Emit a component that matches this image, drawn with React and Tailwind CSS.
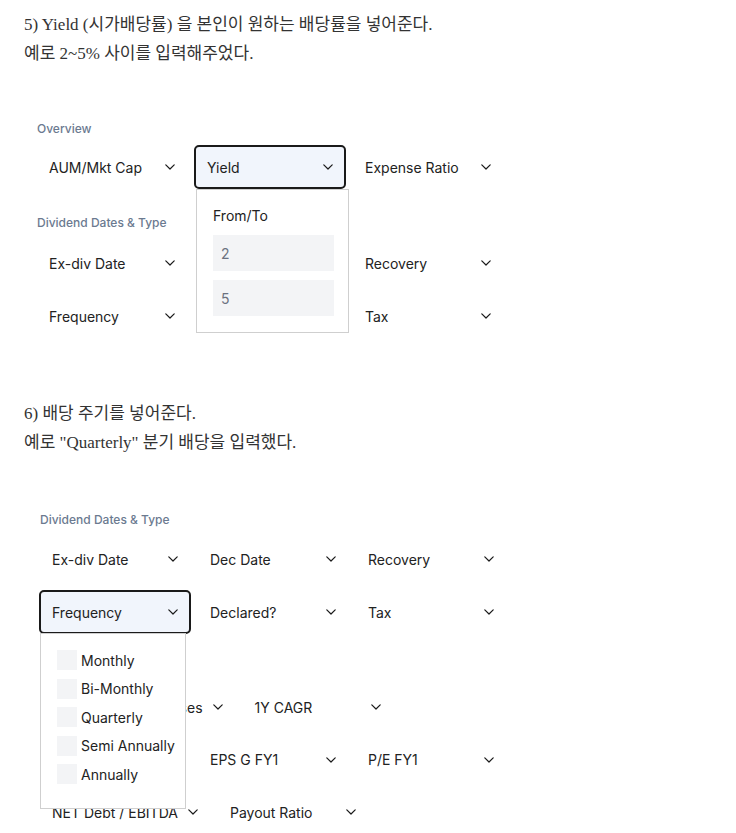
import React from "react";

const Chevron = () => (
  <svg width="10" height="6" viewBox="0 0 10 6" fill="none" className="shrink-0">
    <path d="M0.8 0.8L5 5L9.2 0.8" stroke="#1a1a1a" strokeWidth="1.2" strokeLinecap="round" strokeLinejoin="round" />
  </svg>
);

const Btn = ({ label, selected, children }) => (
  <div className="relative">
    <div
      className={
        selected
          ? "flex h-[44px] min-w-[152px] items-center justify-between gap-[10px] rounded-[5px] border-2 border-[#1a1a1a] bg-[#f1f5fc] px-[11px] text-[14px] text-[#222]"
          : "flex h-[44px] min-w-[150px] items-center justify-between gap-[10px] px-3 text-[14px] text-[#222]"
      }
    >
      <span className="whitespace-nowrap">{label}</span>
      <Chevron />
    </div>
    {children}
  </div>
);

const Label = ({ children, mb = "mb-[10px]" }) => (
  <div className={`${mb} h-[16px] text-[12px] leading-[16px] font-medium text-[#6b7a90]`}>{children}</div>
);

const Row = ({ children }) => <div className="flex gap-2">{children}</div>;

const serif = { fontFamily: '"Liberation Serif", "Noto Sans CJK KR", serif' };
const sans = { fontFamily: 'Inter, "Noto Sans", sans-serif' };

export default function App() {
  return (
    <div className="w-[736px] h-[833px] overflow-hidden bg-white">
      <div className="px-6 pt-[10px] text-[17px] leading-[29px] text-[#333]" style={serif}>
        <p>5) Yield (시가배당률) 을 본인이 원하는 배당률을 넣어준다.</p>
        <p>예로 2~5% 사이를 입력해주었다.</p>
      </div>

      <div className="mt-[53px] pl-[37px]" style={sans}>
        <Label mb="mb-[8px]">Overview</Label>
        <Row>
          <Btn label="AUM/Mkt Cap" />
          <div className="-mx-[1px]">
            <Btn label="Yield" selected>
              <div className="absolute left-[2px] top-[44px] z-10 w-[153px] h-[144px] border border-[#cfcfcf] bg-white px-4 pt-[17px]">
                <div className="text-[14px] leading-[18px] text-[#222]">From/To</div>
                <div className="mt-[10px] flex h-[36px] w-[121px] items-center bg-[#f3f4f6] px-2 text-[14px] text-[#6b7280]">2</div>
                <div className="mt-[9px] flex h-[36px] w-[121px] items-center bg-[#f3f4f6] px-2 text-[14px] text-[#6b7280]">5</div>
              </div>
            </Btn>
          </div>
          <Btn label="Expense Ratio" />
        </Row>
        <div className="mt-[26px]">
          <Label>Dividend Dates &amp; Type</Label>
          <div className="flex flex-col gap-[9px]">
            <Row>
              <Btn label="Ex-div Date" />
              <Btn label="Dec Date" />
              <Btn label="Recovery" />
            </Row>
            <Row>
              <Btn label="Frequency" />
              <Btn label="Declared?" />
              <Btn label="Tax" />
            </Row>
          </div>
        </div>
      </div>

      <div className="mt-[61px] px-6 text-[17px] leading-[29px] text-[#333]" style={serif}>
        <p>6) 배당 주기를 넣어준다.</p>
        <p>예로 "Quarterly" 분기 배당을 입력했다.</p>
      </div>

      <div className="mt-[55px] pl-[40px]" style={sans}>
        <Label mb="mb-[9px]">Dividend Dates &amp; Type</Label>
        <div className="flex flex-col gap-[9px]">
          <Row>
            <Btn label="Ex-div Date" />
            <Btn label="Dec Date" />
            <Btn label="Recovery" />
          </Row>
          <Row>
            <div className="-mx-[1px]">
              <Btn label="Frequency" selected>
                <div className="absolute left-[1px] top-[43px] z-10 w-[146px] h-[176px] border border-[#cfcfcf] bg-white pl-4 pt-[16px]">
                  <div className="flex flex-col gap-[8.5px]">
                    {["Monthly", "Bi-Monthly", "Quarterly", "Semi Annually", "Annually"].map((t) => (
                      <div key={t} className="flex h-[20px] items-center gap-1 text-[14px] text-[#222]">
                        <span className="h-[20px] w-[20px] shrink-0 bg-[#f3f4f6]" />
                        <span className="whitespace-nowrap">{t}</span>
                      </div>
                    ))}
                  </div>
                </div>
              </Btn>
            </div>
            <Btn label="Declared?" />
            <Btn label="Tax" />
          </Row>
        </div>
        <div className="mt-[25px]">
          <Label>Growth</Label>
          <div className="flex flex-col gap-[8.5px]">
            <Row>
              <Btn label="Consecutive Increases" />
              <Btn label="1Y CAGR" />
            </Row>
            <Row>
              <Btn label="Div Growth" />
              <Btn label="EPS G FY1" />
              <Btn label="P/E FY1" />
            </Row>
            <Row>
              <Btn label="NET Debt / EBITDA" />
              <Btn label="Payout Ratio" />
            </Row>
          </div>
        </div>
      </div>
    </div>
  );
}
